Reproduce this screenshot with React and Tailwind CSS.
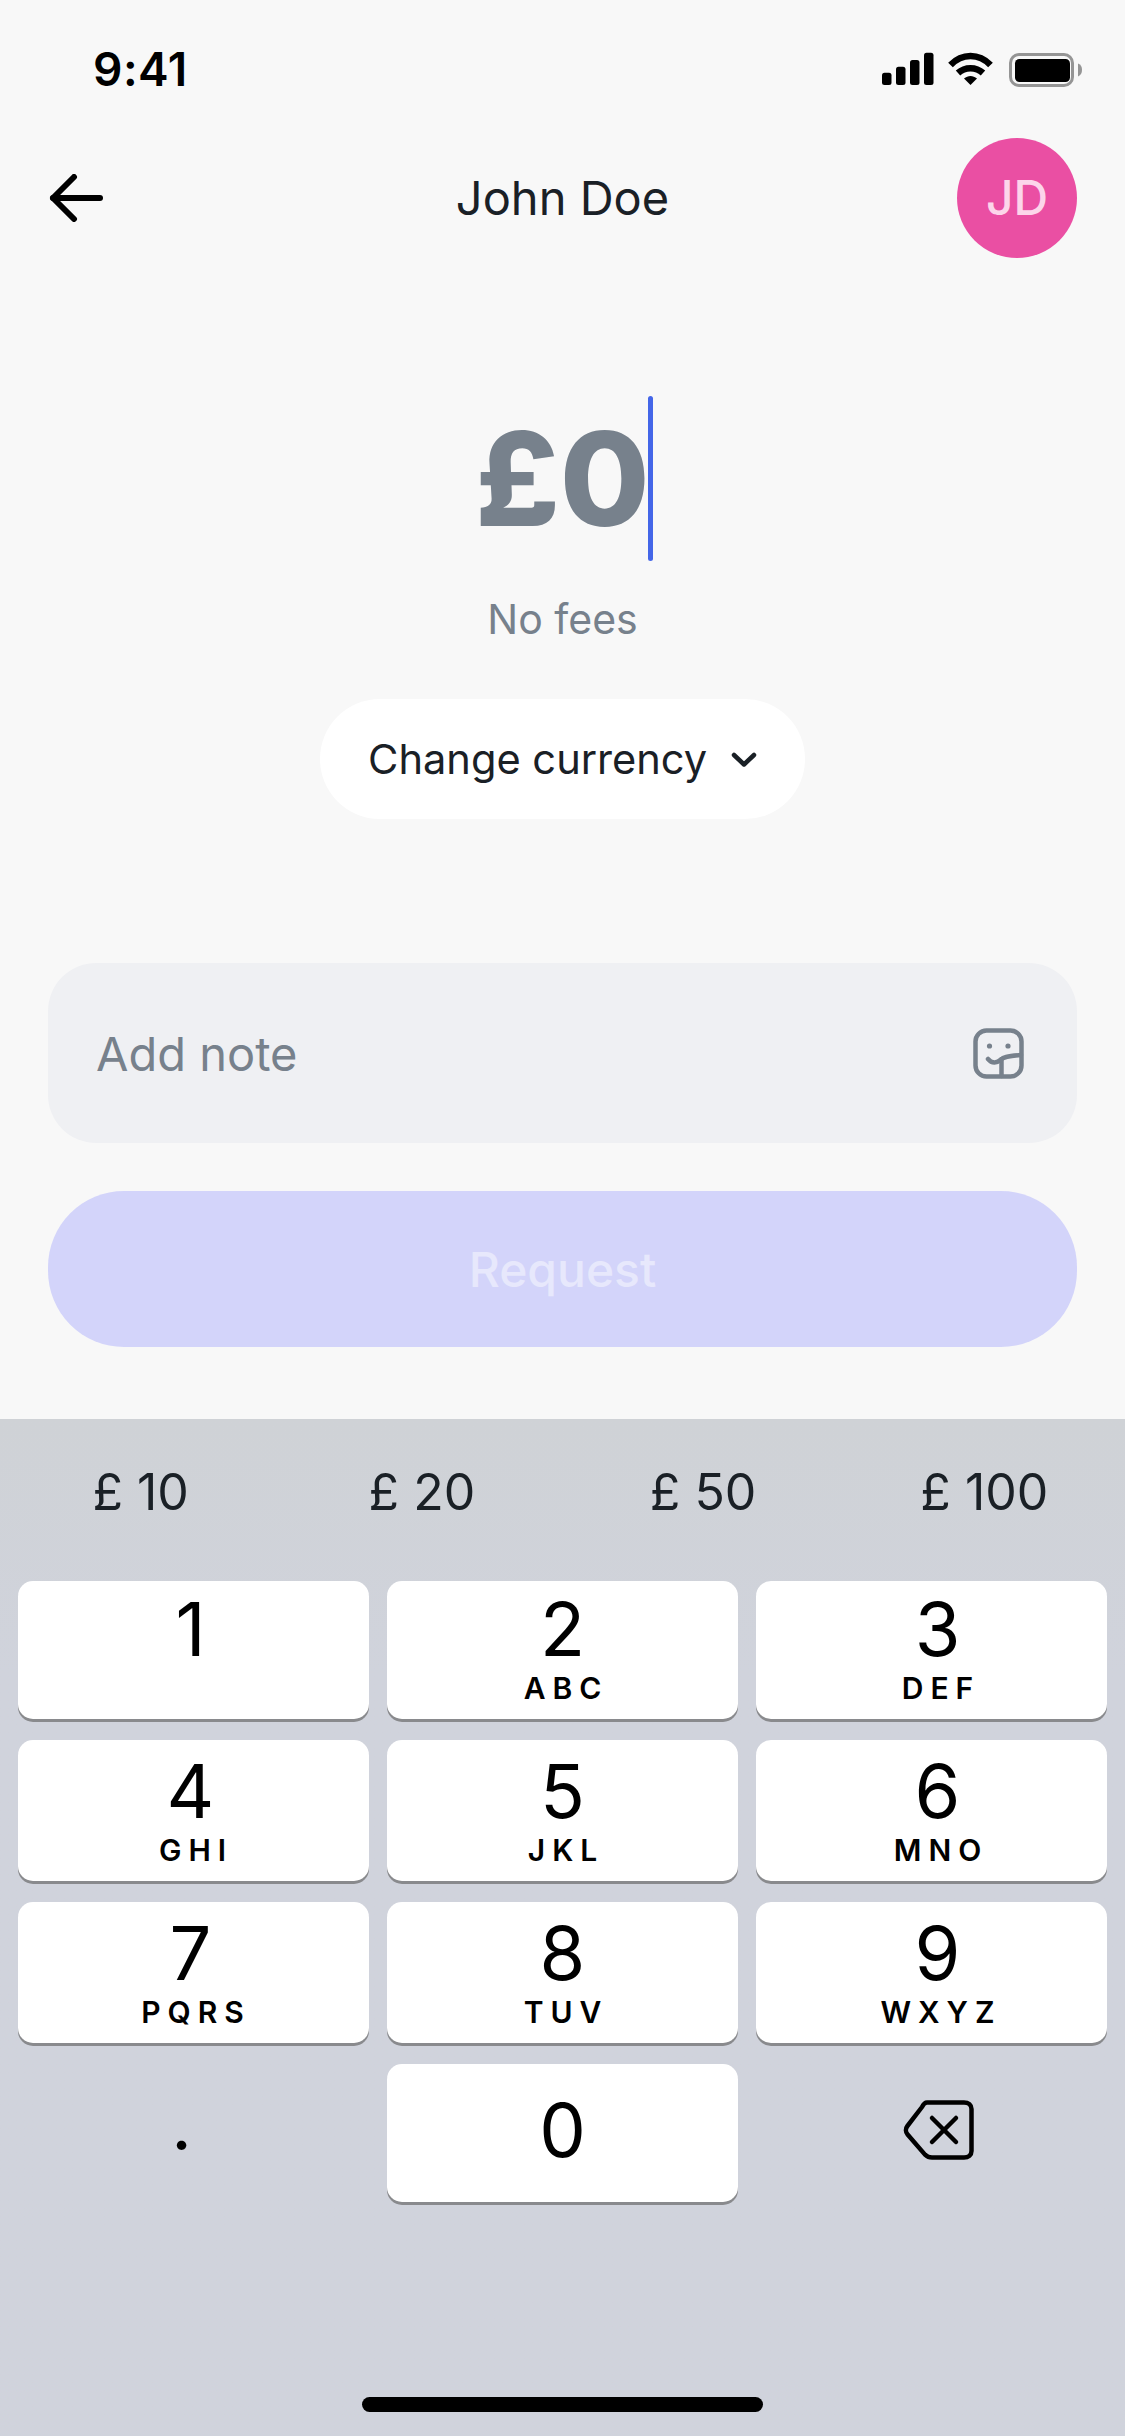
import React from "react";

function Key({ d, l, h, col }) {
  const digitShift = col === 0 ? "pr-[6px]" : col === 2 ? "pl-[12px]" : "";
  const letterShift = col === 0 ? "pl-[5px]" : col === 2 ? "pl-[19px]" : "pl-[7px]";
  return (
    <div className={`${h} bg-white rounded-[15px] shadow-[0_3px_0_#898a8d] flex flex-col items-center text-black`}>
      <div className={`${l === undefined ? "mt-[39px]" : h === "h-[138px]" ? "mt-[21px]" : "mt-[24px]"} ${digitShift} h-[54px] flex items-center justify-center text-[74px] leading-[54px] font-normal`}>{d}</div>
      {l ? <div className={`mt-[20px] h-[24px] flex items-center text-[30px] leading-[24px] font-semibold tracking-[7px] ${letterShift}`}>{l}</div> : null}
    </div>
  );
}

export default function App() {
  return (
    <div className="w-[1125px] h-[2436px] flex flex-col bg-[#f8f8f8] overflow-hidden font-['Inter',sans-serif] text-[#1a2026]">
      <div className="h-[1419px] shrink-0 flex flex-col px-[48px]">
        {/* status bar */}
        <div className="h-[138px] shrink-0 flex justify-between items-start pt-[45px]">
          <div className="pl-[45px] text-[46px] leading-[48px] font-semibold text-black tracking-[0.5px]">9:41</div>
          <svg width="200" height="38" viewBox="0 0 200 38" className="mr-[-5px] mt-[6px]">
            <rect x="0" y="21.7" width="9.5" height="12.3" rx="2.5" fill="#000" />
            <rect x="14" y="15.7" width="9.5" height="18.3" rx="2.5" fill="#000" />
            <rect x="28" y="9" width="9.5" height="25" rx="2.5" fill="#000" />
            <rect x="42" y="1.7" width="9.5" height="32.3" rx="2.5" fill="#000" />
            <path d="M68.5 14 C 80 2, 97 2, 108.5 14" fill="none" stroke="#000" strokeWidth="6.5" strokeLinejoin="round" />
            <path d="M76 22 C 83 15.5, 94 15.5, 101 22" fill="none" stroke="#000" strokeWidth="6.5" />
            <path d="M82 27.5 C 86 24, 91 24, 95 27.5 L 88.5 34 Z" fill="#000" />
            <rect x="128.5" y="3.5" width="62" height="31" rx="8.5" fill="none" stroke="#959595" strokeWidth="3" />
            <rect x="133" y="8" width="55" height="23" rx="4.5" fill="#000" />
            <path d="M196 12.5 C 199 13.5, 200 16, 200 19 C 200 22, 199 24, 196 25.5 Z" fill="#959595" />
          </svg>
        </div>
        {/* header */}
        <div className="h-[120px] shrink-0 flex items-center justify-between">
          <div className="w-[120px] flex items-center">
            <svg width="54" height="48" viewBox="0 0 54 48" className="ml-[1px]" fill="none" stroke="#000" strokeWidth="6" strokeLinecap="round" strokeLinejoin="round">
              <path d="M4 24 H 51" />
              <path d="M25 3 L 4 24 L 25 45" />
            </svg>
          </div>
          <div className="flex-1 text-center text-[47px] leading-[52px] font-normal">John Doe</div>
          <div className="w-[120px] h-[120px] rounded-full bg-[#ea4fa3] flex items-center justify-center text-[48px] font-medium text-[#fcd5ea]">JD</div>
        </div>
        {/* amount */}
        <div className="mt-[138px] h-[165px] flex justify-center items-center shrink-0">
          <div className="relative text-[130px] leading-[165px] font-extrabold text-[#77818c]">
            £0
            <div className="absolute right-[-3px] top-0 w-[5px] h-[165px] rounded-full bg-[#4466e8]" />
          </div>
        </div>
        <div className="mt-[34px] h-[48px] text-center text-[41px] leading-[48px] text-[#77818c] shrink-0">No fees</div>
        <div className="mt-[56px] flex justify-center shrink-0">
          <div className="w-[485px] h-[120px] rounded-full bg-white flex items-center pl-[48px] text-[41.6px] font-normal text-[#1a2026]">
            <span>Change currency</span>
            <svg width="26" height="16" viewBox="0 0 26 16" className="ml-[24px] mt-[2px]" fill="none" stroke="#1a2026" strokeWidth="4.5" strokeLinecap="round" strokeLinejoin="round">
              <path d="M3 3 L 13 12.5 L 23 3" />
            </svg>
          </div>
        </div>
        {/* note */}
        <div className="mt-[144px] h-[180px] shrink-0 rounded-[48px] bg-[#eff0f3] flex items-center justify-between pl-[48px] pr-[53px]">
          <span className="mt-[2px] text-[47px] leading-[52px] text-[#77818c]">Add note</span>
          <svg width="51" height="51" viewBox="0 0 51 51" fill="none" stroke="#77818c" strokeWidth="4.5" strokeLinecap="round" strokeLinejoin="round">
            <rect x="2.5" y="2.5" width="46" height="46" rx="11" />
            <path d="M15 31 C 19 36, 24 35, 28 31.5 C 30 29.5, 33 28, 48 27" />
            <path d="M28.5 31 V 48" />
            <circle cx="16.5" cy="18" r="2.6" fill="#77818c" stroke="none" />
            <circle cx="35" cy="18" r="2.6" fill="#77818c" stroke="none" />
          </svg>
        </div>
        {/* request */}
        <div className="mt-[48px] h-[156px] pt-[2px] shrink-0 rounded-[76px] bg-[#d3d4fa] flex items-center justify-center text-[48px] font-medium text-[#e7e8fc]">
          Request
        </div>
      </div>
      {/* keyboard */}
      <div className="flex-1 flex flex-col bg-gradient-to-b from-[#cfd2d6] to-[#d0d3dc] to-[25%] px-[18px]">
        <div className="h-[162px] pb-[16px] shrink-0 -mx-[18px] grid grid-cols-4 items-center text-[50px] leading-[56px] text-[#1a2026] text-center">
          <span>£&nbsp;10</span>
          <span>£&nbsp;20</span>
          <span>£&nbsp;50</span>
          <span>£&nbsp;100</span>
        </div>
        <div className="grid grid-cols-3 gap-x-[18px] gap-y-[21px]">
          <Key d="1" l="" h="h-[138px]" col={0} />
          <Key d="2" l="ABC" h="h-[138px]" col={1} />
          <Key d="3" l="DEF" h="h-[138px]" col={2} />
          <Key d="4" l="GHI" h="h-[141px]" col={0} />
          <Key d="5" l="JKL" h="h-[141px]" col={1} />
          <Key d="6" l="MNO" h="h-[141px]" col={2} />
          <Key d="7" l="PQRS" h="h-[141px]" col={0} />
          <Key d="8" l="TUV" h="h-[141px]" col={1} />
          <Key d="9" l="WXYZ" h="h-[141px]" col={2} />
          <div className="h-[138px] flex justify-center text-black text-[60px] leading-[54px] font-semibold">
            <span className="mt-[36px] mr-[24px]">.</span>
          </div>
          <Key d="0" h="h-[138px]" col={1} />
          <div className="h-[138px] flex justify-center">
            <svg width="71" height="60" viewBox="0 0 71 60" className="mt-[36px] ml-[14px]" fill="none" stroke="#000" strokeWidth="4.5" strokeLinecap="round" strokeLinejoin="round">
              <path d="M24 2.5 H 61 C 65.5 2.5 68.5 5 68.5 9 V 51 C 68.5 55 65.5 57.5 61 57.5 H 29 C 26 57.5 24 56.5 22 54.6 L 4.6 34.5 C 2.4 32 2.4 28.5 4.4 26 L 19 7 C 20.5 4 22 2.5 24 2.5 Z" />
              <path d="M29 18 L 53 42" />
              <path d="M53 18 L 29 42" />
            </svg>
          </div>
        </div>
        <div className="mt-auto mb-[24px] self-center w-[401px] h-[15px] rounded-full bg-black" />
      </div>
    </div>
  );
}
